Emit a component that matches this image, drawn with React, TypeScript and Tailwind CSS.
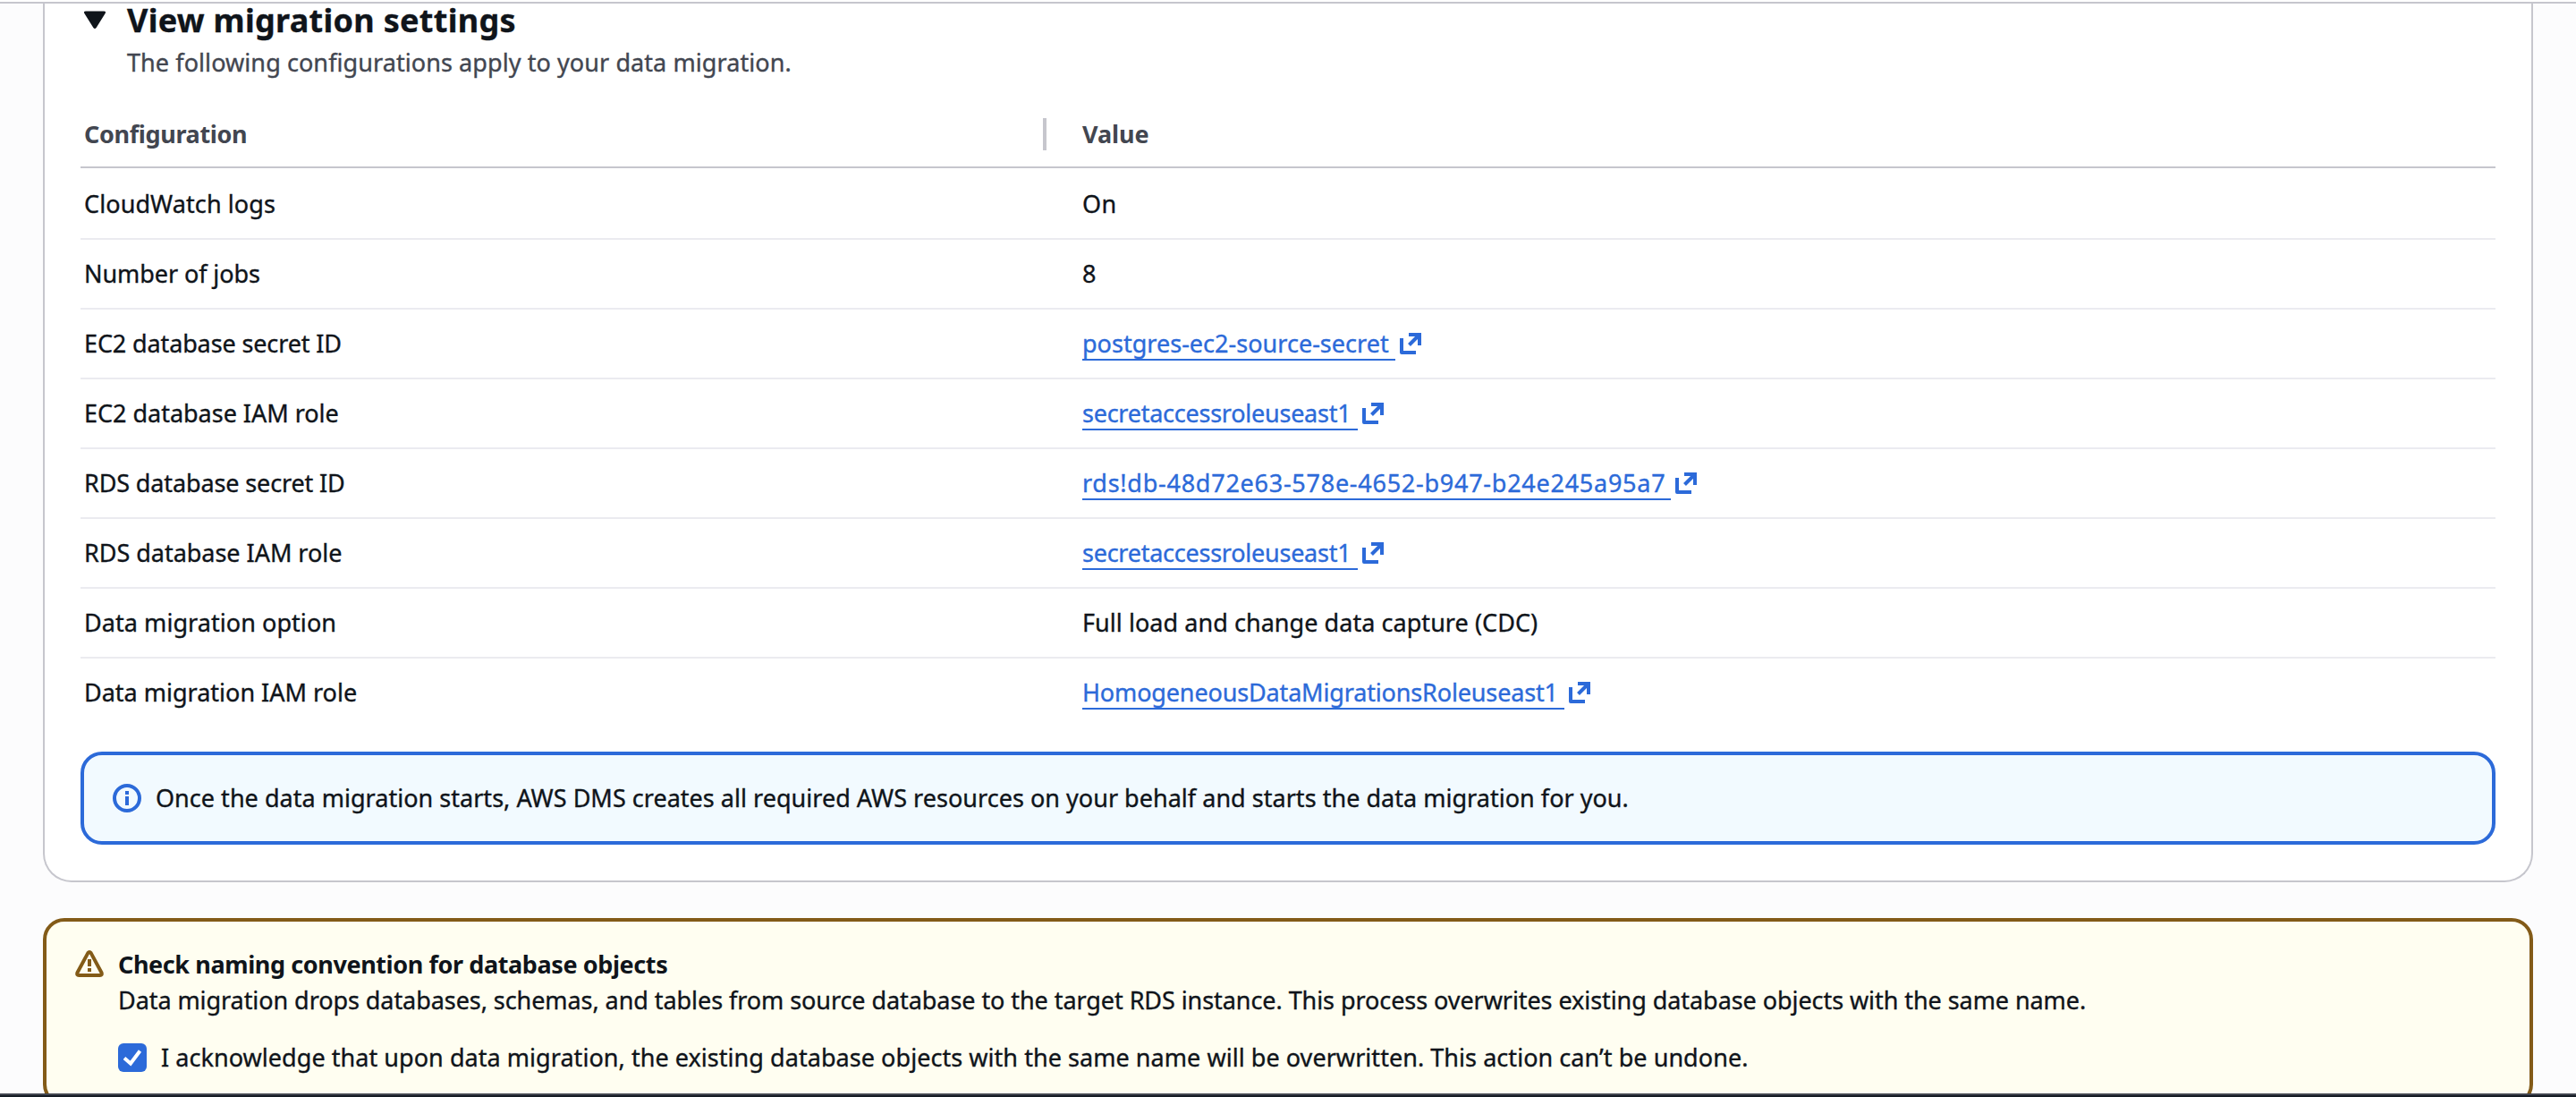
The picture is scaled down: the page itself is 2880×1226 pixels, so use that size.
import type { ReactNode } from 'react';

type Row = {
  name: string;
  nameClass: string;
  value: string;
  valueClass: string;
  linkWidth?: string;
};

const rows: Row[] = [
  { name: 'CloudWatch logs', nameClass: 'tracking-[0.09px]', value: 'On', valueClass: 'tracking-[0.5px]' },
  { name: 'Number of jobs', nameClass: 'tracking-[-0.08px]', value: '8', valueClass: '' },
  { name: 'EC2 database secret ID', nameClass: 'tracking-[-0.13px]', value: 'postgres-ec2-source-secret', valueClass: 'tracking-[0.02px]', linkWidth: 'w-[350px]' },
  { name: 'EC2 database IAM role', nameClass: 'tracking-[-0.02px]', value: 'secretaccessroleuseast1', valueClass: 'tracking-[-0.25px]', linkWidth: 'w-[308px]' },
  { name: 'RDS database secret ID', nameClass: 'tracking-[-0.13px]', value: 'rds!db-48d72e63-578e-4652-b947-b24e245a95a7', valueClass: 'tracking-[0.74px]', linkWidth: 'w-[658px]' },
  { name: 'RDS database IAM role', nameClass: 'tracking-[-0.03px]', value: 'secretaccessroleuseast1', valueClass: 'tracking-[-0.25px]', linkWidth: 'w-[308px]' },
  { name: 'Data migration option', nameClass: 'tracking-[0.06px]', value: 'Full load and change data capture (CDC)', valueClass: 'tracking-[0.05px]' },
  { name: 'Data migration IAM role', nameClass: '', value: 'HomogeneousDataMigrationsRoleuseast1', valueClass: 'tracking-[-0.15px]', linkWidth: 'w-[539px]' },
];

function ExternalIcon() {
  return (
    <svg className="mt-[8px] ml-[5px] size-6 shrink-0" viewBox="0 0 24 24" fill="none" stroke="currentColor" strokeWidth="4">
      <path d="M10 2h12v12" />
      <path d="M22 2 10.500 13.500" />
      <path d="M2 6v16h16" strokeLinejoin="round" />
    </svg>
  );
}

function ExternalLink({ width, textClass, children }: { width: string; textClass: string; children: ReactNode }) {
  return (
    <a href="#" className="flex h-[39px] text-[#2c6ad9]">
      <span className={`${width} h-[39px] shrink-0 border-b-2 border-current whitespace-nowrap`}>
        <span className={`inline-block ${textClass}`}>{children}</span>
      </span>
      <ExternalIcon />
    </a>
  );
}

export default function App() {
  return (
    <div className="flex h-[1226px] w-[2880px] flex-col overflow-hidden bg-[#fcfcfd] font-['Noto_Sans',sans-serif] text-[27px] leading-[40px] whitespace-nowrap text-[#0f141a] [-webkit-text-stroke:0.35px_currentColor]">
      <div className="h-1 shrink-0 border-b-2 border-[#c6c6cd] bg-white" />

      <div className="h-[1218px] shrink-0 overflow-hidden px-12">
        <section className="h-[982px] rounded-b-[32px] border-x-2 border-b-2 border-[#c6c6cd] bg-white px-10">
          <header className="flex h-[114px] pl-1">
            <svg className="mt-[8px] h-5 w-6 shrink-0" viewBox="0 0 24 20" fill="#0f141a">
              <path d="M2 0.500h20q3 0 1.600 2.400L13.600 19q-1.600 2-3.200 0L.4 2.900Q-1 0.500 2 0.500z" />
            </svg>
            <div className="ml-[24px]">
              <h2 className="-mt-[3px] h-[44px] text-[36px] leading-[44px] font-bold tracking-[0.29px]">View migration settings</h2>
              <p className="mt-[5px] text-[#424650] tracking-[0.08px]">The following configurations apply to your data migration.</p>
            </div>
          </header>

          <div className="flex h-[70px] border-b-2 border-[#c6c6cd] pl-1 font-bold text-[#424650] [-webkit-text-stroke:0]">
            <div className="flex w-[1076px] justify-between pt-[12px]">
              <span className="tracking-[-0.35px]">Configuration</span>
              <span className="mt-[2px] h-9 w-1 bg-[#c6c6cd]" />
            </div>
            <span className="ml-[40px] pt-[12px] tracking-[-0.05px]">Value</span>
          </div>

          <div className="h-[652px] pt-[2px]">
            {rows.map((row) => (
              <div key={row.name} className="flex h-[78px] border-b-2 border-[#ebebf0] pt-[18px] pl-1 last:border-transparent">
                <div className="w-[1116px]">
                  <span className={`inline-block ${row.nameClass}`}>{row.name}</span>
                </div>
                {row.linkWidth ? (
                  <ExternalLink width={row.linkWidth} textClass={row.valueClass}>{row.value}</ExternalLink>
                ) : (
                  <span className={row.valueClass}>{row.value}</span>
                )}
              </div>
            ))}
          </div>

          <div className="flex h-[104px] rounded-[24px] border-4 border-[#2c6ad9] bg-[#f2faff] pt-[27px] pl-[32px]">
            <svg className="mt-[5px] size-8 shrink-0 text-[#2c6ad9]" viewBox="0 0 32 32" fill="none" stroke="currentColor" strokeWidth="4">
              <circle cx="16" cy="16" r="14" />
              <path d="M16 8v4M16 14v10" />
            </svg>
            <span className="mt-px ml-[16px] tracking-[0.026px]">
              Once the data migration starts, AWS DMS creates all required AWS resources on your behalf and starts the data migration for you.
            </span>
          </div>
        </section>

        <section className="mt-[40px] flex h-[210px] rounded-[24px] border-4 border-[#835b18] bg-[#fffef1] pt-[28px] pl-[32px]">
          <svg className="mt-[4px] h-[30px] w-8 shrink-0" viewBox="0 0 32 30" fill="none" stroke="#835b18" strokeWidth="4">
            <path d="M14.300 3.100 2.500 25Q1.500 28 4.200 28H27.800Q30.500 28 29.500 25L17.700 3.100Q16 1 14.300 3.100z" strokeLinejoin="round" />
            <path d="M16 10v8M16 20v4" />
          </svg>
          <div className="ml-[16px]">
            <h3 className="font-bold tracking-[-0.4px] [-webkit-text-stroke:0]">Check naming convention for database objects</h3>
            <p className="tracking-[-0.067px]">
              Data migration drops databases, schemas, and tables from source database to the target RDS instance. This process overwrites existing database objects with the same name.
            </p>
            <label className="mt-[24px] flex">
              <span className="mt-[4px] flex size-8 shrink-0 items-center justify-center rounded-[6px] bg-[#2c6ad9]">
                <svg className="size-8" viewBox="0 0 32 32" fill="none" stroke="white" strokeWidth="4">
                  <path d="m7 16.500 7 6L24.500 8.500" />
                </svg>
              </span>
              <span className="ml-[16px] tracking-[0.048px]">
                I acknowledge that upon data migration, the existing database objects with the same name will be overwritten. This action can’t be undone.
              </span>
            </label>
          </div>
        </section>
      </div>

      <div className="h-1 shrink-0 border-t-2 border-[#424650] bg-[#161d26]" />
    </div>
  );
}
